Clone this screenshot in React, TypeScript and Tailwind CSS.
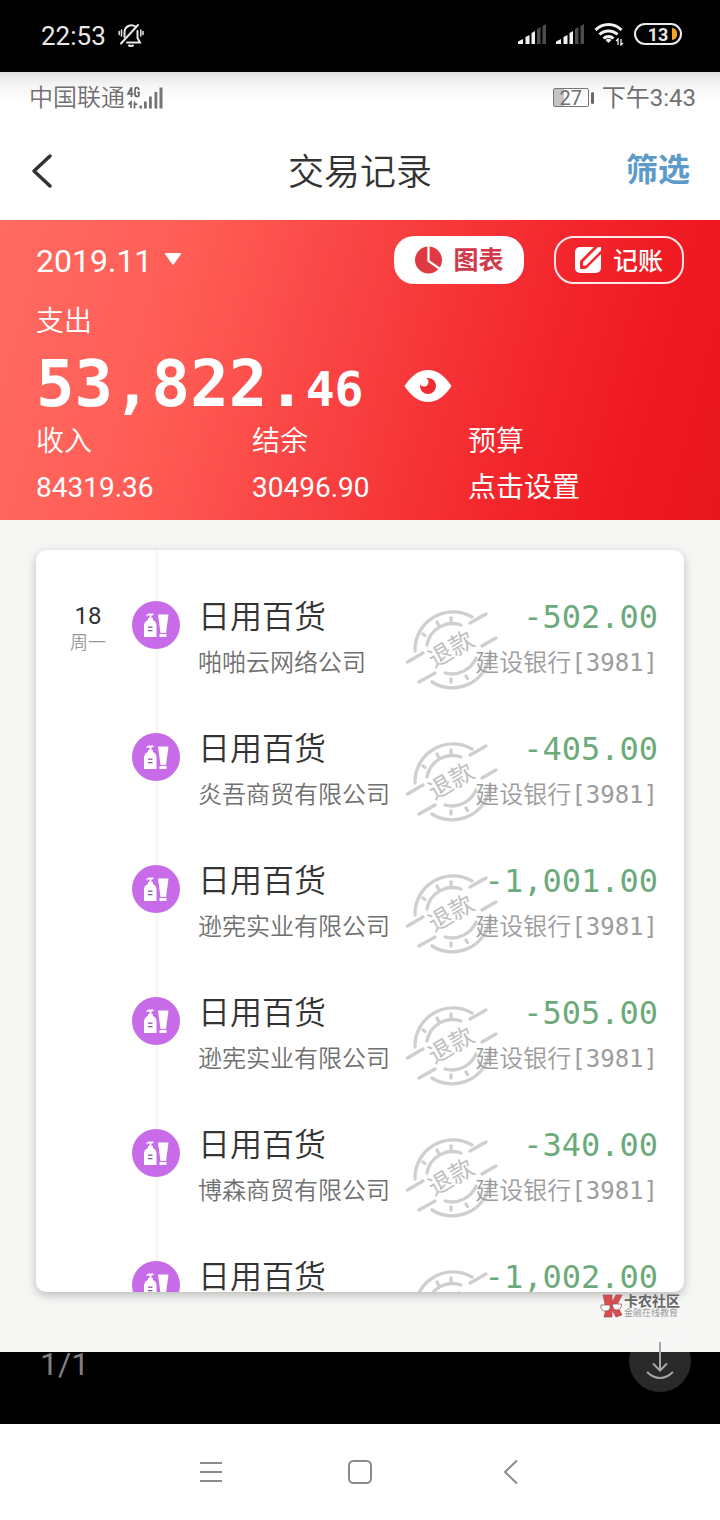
const han = 'font-["Roboto","Noto_Sans_CJK_SC",sans-serif]';
const mono = 'font-["DejaVu_Sans_Mono","Noto_Sans_CJK_SC",monospace]';

const records = [
  { company: "啪啪云网络公司", amount: "-502.00" },
  { company: "炎吾商贸有限公司", amount: "-405.00" },
  { company: "逊宪实业有限公司", amount: "-1,001.00" },
  { company: "逊宪实业有限公司", amount: "-505.00" },
  { company: "博森商贸有限公司", amount: "-340.00" },
  { company: "博森商贸有限公司", amount: "-1,002.00" },
];

const totals = [
  { label: "收入", value: "84319.36" },
  { label: "结余", value: "30496.90" },
  { label: "预算", value: "点击设置" },
];

function MutedBell() {
  return (
    <svg width="26" height="26" viewBox="0 0 26 26" fill="none" stroke="#e8e8e8" strokeWidth="2" strokeLinecap="round" aria-hidden="true">
      <path d="M6.500 14V9a7 7 0 0 1 11-5.500M19.500 8v7l2.500 4.500H9M11 22.500q2 1 4 0" />
      <path d="M3 20.500 20 2" />
      <path d="M3.500 7v6M1.200 8.500v3M22.800 7v6M25 8.500v3" strokeWidth="1.500" />
    </svg>
  );
}

function PhoneSignal() {
  return (
    <svg width="28" height="20" viewBox="0 0 28 20" aria-hidden="true">
      <path d="M0 20v-2.500l5-2.500v5zM7.500 20v-7l4-2v9zM13.500 20V9l3.500-2v13z" fill="#f2f2f2" />
      <path d="M19 20V5l3.500-2v17zM24.500 20V2L28 0v20z" fill="#4d4d4d" />
    </svg>
  );
}

function Wifi() {
  return (
    <svg width="30" height="24" viewBox="0 0 30 24" fill="none" stroke="#f2f2f2" strokeWidth="3" aria-hidden="true">
      <path d="M1.500 8a18 18 0 0 1 26 0M5.500 12.500a13 13 0 0 1 18 0M9.500 16.500a7.500 7.500 0 0 1 10 0" />
      <path d="m14.500 21-3-3a4.500 4.500 0 0 1 6 0z" fill="#f2f2f2" stroke="none" />
      <path d="M24 23v-6l-2 2M27 17v6l2-2" strokeWidth="1.300" />
    </svg>
  );
}

function CarrierSignal() {
  return (
    <svg width="37" height="24" viewBox="0 0 37 24" aria-hidden="true">
      <g fill="none" stroke="#666" strokeWidth="1.700">
        <path d="M4.500 11V1.500L1 8h5.500M12 4q-.5-2.500-2.200-2.500Q8 1.500 8 4v4q0 2.500 2 2.500t2-2V6.500h-2" />
        <path d="M4 22v-6l-2.500 2.500M7.500 15.500v7M7.500 18.500l3-.5" />
      </g>
      <path d="M12.500 19.500H15v3h-2.500zM17 15.500h2.800v7H17zM22 10.500h2.800v12H22zM27.500 6h2.800v16.500h-2.800zM32.500 1.500h3v21h-3z" fill="#757575" />
    </svg>
  );
}

function GoodsIcon() {
  return (
    <span className="flex size-12 shrink-0 items-center justify-center rounded-full bg-[#c76be8]">
      <svg width="48" height="48" viewBox="0 0 48 48" fill="#fff" aria-hidden="true">
        <path d="M12 36V24.500q0-4 4-5.500v-2h5v2q3.500 1.500 3.500 5.500V36z" />
        <path d="M14 15.500q.5-3 3.500-3h4v1.700h-2V17h-2v-2.800q-2 0-3.500 1.300z" />
        <path d="M26 13.500h10.500L34 32h-5.500zM27.500 33h7v3h-7z" />
        <path d="M16 25.500h4.500v1.300H16zM16 29h4.500v1.300H16z" fill="#7d4fa0" />
      </svg>
    </span>
  );
}

function RefundStamp() {
  return (
    <svg className="absolute top-[14px] left-[208px]" width="92" height="84" viewBox="0 0 92 84" aria-label="退款">
      <g fill="none" stroke="#cfcfcf" strokeWidth="3.300" strokeLinecap="round">
        <path d="M9 43A38 38 0 0 1 66 9M26 74A38 38 0 0 0 84 47" />
        <path d="M21 37A26 26 0 0 1 55 17M39 65A26 26 0 0 0 70 50" />
        <path d="M1.500 54 17 45M64 15 80 6M76 38 90 30M13 74 29 65" />
        <path d="m17 26 2 1.500M31 14l1.500 3M45 10v3.500M45 71v3M60 68l1.500 2.500" />
      </g>
      <text x="45" y="49" textAnchor="middle" fontSize="24" fontFamily="'Noto Sans CJK SC', sans-serif" fill="#c0c0c0" transform="rotate(-30 46 41)">退款</text>
    </svg>
  );
}

function Record({ company, amount, first }: { company: string; amount: string; first: boolean }) {
  return (
    <li className="flex items-start">
      <div className="w-24 shrink-0 pl-2 text-center">
        {first && (
          <>
            <div className="pt-2 text-[24px] leading-7 text-[#333]">18</div>
            <div className="pt-px text-[18px] leading-6 font-[350] text-[#999]">周一</div>
          </>
        )}
      </div>
      <div className="pt-[7px]">
        <GoodsIcon />
      </div>
      <div className="relative ml-[18px] min-w-0 flex-1 pt-px pr-[26px]">
        <RefundStamp />
        <div className="relative flex justify-between leading-[44px]">
          <span className="text-[32px] font-[350] text-[#333]">日用百货</span>
          <span className={`${mono} text-[32px] text-[#6bab7b]`}>{amount}</span>
        </div>
        <div className="relative mt-2 flex justify-between text-[24px] leading-8 font-[350]">
          <span className="text-[#707070]">{company}</span>
          <span className={`${mono} text-[#9c9c9c]`}>建设银行[3981]</span>
        </div>
      </div>
    </li>
  );
}

export default function App() {
  return (
    <div className={`${han} flex h-screen flex-col overflow-hidden bg-white`} lang="zh-CN">
      <div className="flex h-[72px] shrink-0 items-center justify-between bg-black pr-[38px] pl-[41px] text-[#e8e8e8]">
        <div className="flex items-center gap-3 text-[26px]">
          <span>22:53</span>
          <MutedBell />
        </div>
        <div className="flex items-center gap-[10px] pb-1">
          <PhoneSignal />
          <PhoneSignal />
          <Wifi />
          <span className="relative flex h-[22px] w-12 items-center justify-center rounded-full border-2 border-[#ececec] text-[18px] font-bold">
            13
            <span className="absolute right-[3px] h-3 w-[5px] rounded-r-full bg-[#f5a623]" />
          </span>
        </div>
      </div>

      <header className="shrink-0 bg-linear-to-b from-[#e0e0e0] via-[#f7f7f7] via-10% to-white to-20% text-[#707070]">
        <div className="flex h-[50px] items-center justify-between pt-px pr-6 pl-[29px] text-[24px]">
          <div className="flex items-center gap-[2px]">
            <span className="font-[350]">中国联通</span>
            <CarrierSignal />
          </div>
          <div className="flex items-center gap-2">
            <span className="flex items-center gap-[2px]">
              <span className="flex h-[19px] w-9 items-center justify-center rounded-xs border border-[#777] bg-linear-to-r from-[#c4c4c4] from-30% to-transparent to-30% text-[20px]">27</span>
              <span className="h-3 w-[3px] rounded-sm bg-[#666]" />
            </span>
            <span>下午3:43</span>
          </div>
        </div>
        <div className="grid h-[98px] grid-cols-[1fr_auto_1fr] items-center px-[30px]">
          <button aria-label="返回" className="justify-self-start">
            <svg width="24" height="36" viewBox="0 0 24 36" fill="none" stroke="#333" strokeWidth="3.500" strokeLinecap="round" strokeLinejoin="round" aria-hidden="true">
              <path d="M20 3 4 18 20 33" />
            </svg>
          </button>
          <h1 className="pt-1 text-[36px] font-[350] text-[#333]">交易记录</h1>
          <button className="justify-self-end pb-[2px] text-[32px] font-bold text-[#5c9bc9]">筛选</button>
        </div>
      </header>

      <section className="shrink-0 bg-[linear-gradient(105deg,#ff6b61_0%,#ff5d56_25%,#f83f40_50%,#f3262c_72%,#ef1820_88%,#e7161d_100%)] px-9 pt-4 pb-3 text-white">
        <div className="flex h-12 items-center justify-between">
          <button className="flex items-center gap-3 pt-[2px] text-[32px]">
            2019.11
            <svg width="18" height="18" viewBox="0 0 18 18" fill="#fff" aria-hidden="true"><path d="M1 2q0-1 1-1h14q1 0 1 1l-7 10q-1 1.300-2 0z" /></svg>
          </button>
          <div className="flex gap-[30px]">
            <button className="flex h-12 w-[130px] items-center justify-center gap-[10px] rounded-[20px] bg-white text-[25px] font-bold text-[#d0394a]">
              <svg width="29" height="28" viewBox="0 0 29 28" aria-hidden="true">
                <circle cx="14.500" cy="14" r="13.500" fill="#df3a42" />
                <path d="M14.500 0v15L26 23" fill="none" stroke="#fff" strokeWidth="2.200" />
              </svg>
              <span className="pt-[2px]">图表</span>
            </button>
            <button className="flex h-12 w-[130px] items-center justify-center gap-3 rounded-[20px] border-2 border-white/90 text-[25px] font-medium">
              <svg width="26" height="26" viewBox="0 0 26 26" fill="none" aria-hidden="true">
                <rect width="26" height="26" rx="5" fill="#fff" />
                <path d="M5 22v-8L19 0h7v7L12 21q-1 1-3 1z" fill="#f12a30" />
                <path d="M8 18.500V15L23 0h3v3.500L11.500 18q-.5.500-1.500.500z" fill="#fff" />
              </svg>
              <span className="pt-[3px]">记账</span>
            </button>
          </div>
        </div>
        <div className="mt-[18px] text-[28px] leading-10 font-[350]">支出</div>
        <div className="mt-3 flex h-16 items-center">
          <span className={`${mono} text-[64px] leading-[64px] font-bold`}>
            53,822.<span className="text-[48px]">46</span>
          </span>
          <button aria-label="隐藏金额" className="ml-10">
            <svg width="48" height="32" viewBox="0 0 48 32" aria-hidden="true">
              <path d="M.5 16Q11 0 24 0t23.500 16Q37 32 24 32T.5 16z" fill="#fff" />
              <circle cx="24" cy="16" r="8" fill="#ee2c32" />
              <circle cx="20" cy="12" r="4.500" fill="#fff" />
            </svg>
          </button>
        </div>
        <dl className="mt-1 grid grid-cols-3 text-[28px] leading-10">
          {totals.map((t) => (
            <div key={t.label}>
              <dt className="font-[350]">{t.label}</dt>
              <dd className="mt-[6px]">{t.value}</dd>
            </div>
          ))}
        </dl>
      </section>

      <main className="relative flex min-h-0 flex-1 flex-col bg-[#f6f6f5] px-9 pt-[30px] pb-[60px]">
        <div className="relative min-h-0 flex-1 overflow-hidden rounded-[10px] bg-white shadow-[0_3px_10px_rgba(0,0,0,0.25)]">
          <div className="absolute inset-y-0 left-[120px] w-[2px] bg-[#f6f4f6]" />
          <ul className="relative flex flex-col gap-[47px] pt-11">
            {records.map((r, i) => (
              <Record key={i} {...r} first={i === 0} />
            ))}
          </ul>
        </div>
        <div className="absolute right-10 bottom-[34px] flex items-center">
          <svg width="24" height="24" viewBox="0 0 24 24" aria-hidden="true">
            <path d="M3 1h9v7l4-7h6l-5 10 5 10-6 2-4-7v7H4l2-8z" fill="#dc4b50" stroke="#8c4a4a" strokeWidth=".6" />
            <path d="M1 11h9q1 6-4.500 6T1 11zM12.500 10h9q0 6-4.500 6t-4.500-6z" fill="#fff" stroke="#8c5a5a" strokeWidth=".8" />
          </svg>
          <div>
            <div className="text-[14px] leading-[14px] font-bold text-[#666]">卡农社区</div>
            <div className="text-[9px] leading-[10px] text-[#999]">金融在线教育</div>
          </div>
        </div>
      </main>

      <div className="relative flex h-[72px] shrink-0 items-start bg-black pl-10">
        <span className="text-[32px] leading-6 text-[#808080]">1/1</span>
        <button aria-label="下载" className="absolute right-[29px] bottom-8 flex size-[62px] items-center justify-center rounded-full bg-white/16">
          <svg width="62" height="62" viewBox="0 0 62 62" fill="none" stroke="#a6a6a6" strokeWidth="2" aria-hidden="true">
            <path d="M31 12v28M24 33.500l7 7 7-7M18 42q13 12 26 0" />
          </svg>
        </button>
      </div>

      <nav className="grid h-24 shrink-0 grid-cols-[1fr_auto_1fr] items-center bg-white px-[195px]">
        <button aria-label="菜单" className="justify-self-start">
          <svg width="32" height="32" viewBox="0 0 32 32" stroke="#8a8a8a" strokeWidth="2" aria-hidden="true"><path d="M5 7h22M5 16h22M5 25h22" /></svg>
        </button>
        <button aria-label="主页">
          <svg width="32" height="32" viewBox="0 0 32 32" fill="none" stroke="#8a8a8a" strokeWidth="2" aria-hidden="true"><rect x="5" y="5" width="22" height="22" rx="4.500" /></svg>
        </button>
        <button aria-label="后退" className="justify-self-end">
          <svg width="32" height="32" viewBox="0 0 32 32" fill="none" stroke="#8a8a8a" strokeWidth="2" aria-hidden="true"><path d="M24 4.500 12 16l12 11.500" /></svg>
        </button>
      </nav>
    </div>
  );
}
